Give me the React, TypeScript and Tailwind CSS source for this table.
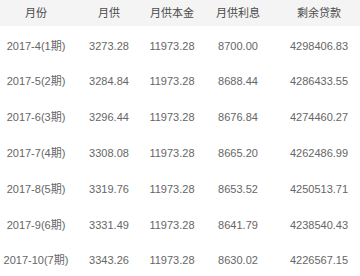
const rows = [
  ["2017-4(1期)", "3273.28", "11973.28", "8700.00", "4298406.83"],
  ["2017-5(2期)", "3284.84", "11973.28", "8688.44", "4286433.55"],
  ["2017-6(3期)", "3296.44", "11973.28", "8676.84", "4274460.27"],
  ["2017-7(4期)", "3308.08", "11973.28", "8665.20", "4262486.99"],
  ["2017-8(5期)", "3319.76", "11973.28", "8653.52", "4250513.71"],
  ["2017-9(6期)", "3331.49", "11973.28", "8641.79", "4238540.43"],
  ["2017-10(7期)", "3343.26", "11973.28", "8630.02", "4226567.15"],
];

const headers = ["月份", "月供", "月供本金", "月供利息", "剩余贷款"];

const cols = "grid grid-cols-[72px_74px_52px_80px_82px]";

export default function App() {
  return (
    <div
      className="w-[360px] h-[276px] overflow-hidden bg-white"
      style={{ fontFamily: '"Liberation Sans", "Noto Sans CJK SC", sans-serif' }}
    >
      <div className={`${cols} h-[26px] items-center bg-[#f4f4f4] text-[11px] text-[#4a4a4a]`}>
        {headers.map((h) => (
          <div key={h} className="text-center whitespace-nowrap">
            {h}
          </div>
        ))}
      </div>
      <div className="pt-[2px]">
        {rows.map((r) => (
          <div key={r[0]} className={`${cols} h-[35.8px] items-center text-[11px] text-[#666]`}>
            {r.map((c, i) => (
              <div key={i} className="text-center whitespace-nowrap">
                {c}
              </div>
            ))}
          </div>
        ))}
      </div>
    </div>
  );
}
